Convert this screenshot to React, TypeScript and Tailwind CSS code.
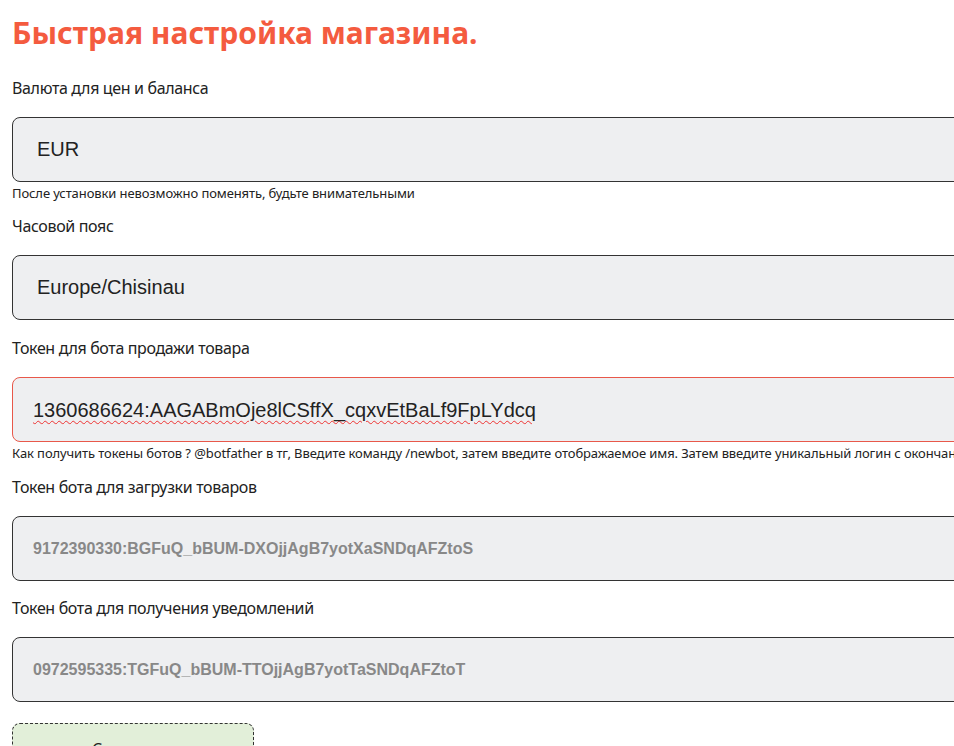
import React from "react";

const label = "block text-base leading-6 tracking-[-0.35px] text-[#222]";
const box = "block h-[65px] w-[1100px] rounded-lg border bg-[#eeeff1] px-6 outline-none";
const help = "whitespace-nowrap text-[13px] leading-4 tracking-[-0.1px] text-[#222]";

export default function App() {
  return (
    <div className="h-[746px] w-[954px] overflow-hidden bg-white px-3 pt-[15px] font-['Noto_Sans',sans-serif]">
      <h1 className="text-[30px] font-bold leading-9 text-[#f45b3f]">Быстрая настройка магазина.</h1>

      <div className="mt-[25px]">
        <span className={label}>Валюта для цен и баланса</span>
        <input className={`${box} mt-[17px] border-[#333] font-['Liberation_Sans',sans-serif] text-xl text-[#222]`} defaultValue="EUR" readOnly />
        <p className={`${help} mt-[3px]`}>После установки невозможно поменять, будьте внимательными</p>
      </div>

      <div className="mt-[13px]">
        <span className={label}>Часовой пояс</span>
        <input className={`${box} mt-[17px] border-[#333] font-['Liberation_Sans',sans-serif] text-xl text-[#222]`} defaultValue="Europe/Chisinau" readOnly />
      </div>

      <div className="mt-[16px]">
        <span className={label}>Токен для бота продажи товара</span>
        <div className={`${box} mt-[17px] flex items-center border-[#e8584a] pl-5 font-['Liberation_Sans',sans-serif] text-xl text-[#222]`}>
          <span className="underline decoration-[#e33] decoration-wavy decoration-1 underline-offset-[3px]">1360686624:AAGABmOje8lCSffX_cqxvEtBaLf9FpLYdcq</span>
        </div>
        <p className={`${help} mt-[3px]`}>Как получить токены ботов ? @botfather в тг, Введите команду /newbot, затем введите отображаемое имя. Затем введите уникальный логин с окончанием bot</p>
      </div>

      <div className="mt-[14px]">
        <span className={label}>Токен бота для загрузки товаров</span>
        <input className={`${box} mt-[17px] border-[#333] pl-5 font-['Liberation_Sans',sans-serif] text-base font-bold text-[#888]`} defaultValue="9172390330:BGFuQ_bBUM-DXOjjAgB7yotXaSNDqAFZtoS" readOnly />
      </div>

      <div className="mt-[15px]">
        <span className={label}>Токен бота для получения уведомлений</span>
        <input className={`${box} mt-[17px] border-[#333] pl-5 font-['Liberation_Sans',sans-serif] text-base font-bold text-[#888]`} defaultValue="0972595335:TGFuQ_bBUM-TTOjjAgB7yotTaSNDqAFZtoT" readOnly />
      </div>

      <button className="mt-[21px] block h-[60px] w-[242px] rounded-lg border border-dashed border-[#333] bg-[#e2efd9] pb-[8px] text-base leading-6 text-[#222]">Сохранить</button>
    </div>
  );
}
